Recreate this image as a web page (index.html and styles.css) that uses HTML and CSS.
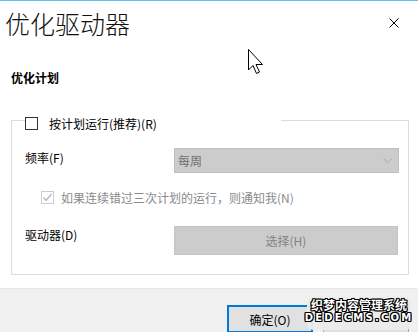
FILE: index.html
```html
<!DOCTYPE html>
<html lang="zh-CN">
<head>
<meta charset="utf-8">
<title>优化驱动器</title>
<link rel="stylesheet" href="styles.css">
</head>
<body>
<div class="dialog">
  <div class="header">
    <h1 class="title">优化驱动器</h1>
    <svg class="close" width="10" height="10" viewBox="0 0 10 10"><path d="M0.5 0.5L9.5 9.5M9.5 0.5L0.5 9.5" stroke="#000" stroke-width="1" fill="none"/></svg>
  </div>
  <div class="section-title">优化计划</div>
  <fieldset class="group">
    <legend class="legend">
      <span class="check"></span>
      <span class="legend-text">按计划运行(推荐)(R)</span>
    </legend>
    <div class="row row-freq">
      <span class="label">频率(F)</span>
      <div class="combo"><span class="combo-text">每周</span>
        <svg class="chev" width="9" height="5" viewBox="0 0 9 5"><path d="M0.5 0.5L4.5 4.5L8.5 0.5" stroke="#a8a8a8" fill="none"/></svg>
      </div>
    </div>
    <div class="row row-notify">
      <span class="check check-disabled">
        <svg width="11" height="11" viewBox="0 0 11 11"><path d="M1.5 5.5L4 8.5L9.5 2" stroke="#b3b3b3" stroke-width="1.2" fill="none"/></svg>
      </span>
      <span class="notify-text">如果连续错过三次计划的运行，则通知我(N)</span>
    </div>
    <div class="row row-drive">
      <span class="label">驱动器(D)</span>
      <div class="btn-select">选择(H)</div>
    </div>
  </fieldset>
  <div class="footer">
    <div class="btn btn-ok">确定(O)</div>
    <div class="btn btn-cancel"></div>
  </div>
  <div class="watermark">
    <span class="wm-cn">织梦内容管理系统</span>
    <span class="wm-en">DEDECMS.COM</span>
  </div>
  <svg class="cursor" width="18" height="27" viewBox="0 0 18 27"><path d="M0.5 0.5L0.5 21L5 16.5L8.5 24.5L11.5 23L8 15.5L14.5 15.5Z" fill="#fff" stroke="#000" stroke-width="1" stroke-linejoin="miter"/></svg>
</div>
</body>
</html>
```

FILE: styles.css
```css
* { box-sizing: border-box; }
html, body { margin: 0; padding: 0; }
body {
  width: 418px;
  height: 332px;
  overflow: hidden;
  background: #fff;
  font-family: "Noto Sans CJK SC", "Noto Sans", sans-serif;
  font-size: 12px;
  color: #000;
}
.dialog {
  position: relative;
  height: 332px;
  border-top: 1px solid #62c0ec;
  display: flex;
  flex-direction: column;
}
.header {
  display: flex;
  justify-content: space-between;
  align-items: flex-start;
  margin-top: 7px;
  height: 30px;
}
.title {
  margin: 0 0 0 5px;
  font-size: 25px;
  line-height: 30px;
  font-weight: 300;
  color: #111;
}
.close {
  margin: 10px 19px 0 0;
  display: block;
}
.section-title {
  margin: 32px 0 0 11px;
  font-weight: 700;
  line-height: 16px;
  font-size: 12px;
}
.group {
  margin: 31px 9px 0 11px;
  padding: 24px 0 19px 13px;
  border: 1px solid #dcdcdc;
  min-width: 0;
}
.legend {
  margin-left: 0;
  padding: 0;
  width: 256px;
  height: 7px;
  display: flex;
  align-items: flex-start;
  overflow: visible;
}
.check {
  flex: none;
  width: 13px;
  height: 13px;
  border: 1px solid #333;
  background: #fff;
  display: flex;
  align-items: center;
  justify-content: center;
}
.check-disabled {
  border-color: #cccccc;
}
.legend-text {
  margin-left: 11px;
  line-height: 13px;
  white-space: nowrap;
}
.row {
  display: flex;
  align-items: flex-start;
}
.label {
  width: 149px;
  flex: none;
  line-height: 16px;
  margin-top: 2px;
}
.row-drive .label { margin-top: 1px; }
.combo {
  width: 225px;
  height: 25px;
  background: #cccccc;
  border: 1px solid #bfbfbf;
  display: flex;
  align-items: center;
  justify-content: space-between;
  padding: 0 6px 0 3px;
}
.combo-text {
  color: #6f6f6f;
  line-height: 16px;
}
.chev { display: block; }
.row-notify {
  margin-top: 18px;
  padding-left: 16px;
  align-items: center;
}
.notify-text {
  margin-left: 7px;
  color: #8a8a8a;
  line-height: 13px;
  white-space: nowrap;
}
.row-drive {
  margin-top: 22px;
}
.btn-select {
  width: 224px;
  height: 29px;
  background: #cccccc;
  border: 1px solid #c4c4c4;
  display: flex;
  align-items: center;
  justify-content: center;
  color: #838383;
}
.footer {
  margin-top: 13px;
  flex: 1;
  background: #f0f0f0;
  border-top: 1px solid #e6e6e6;
  display: flex;
  justify-content: flex-end;
  align-items: flex-start;
  gap: 10px;
  padding: 16px 9px 0 0;
}
.btn {
  width: 86px;
  height: 28px;
  background: #e1e1e1;
  border: 1px solid #adadad;
  display: flex;
  align-items: center;
  justify-content: center;
}
.btn-ok {
  border: 2px solid #0078d7;
}
.watermark {
  position: absolute;
  left: 307px;
  top: 296px;
  width: 104px;
  display: flex;
  flex-direction: column;
  align-items: center;
  background: rgba(235,235,235,0.95);
  border-radius: 6px;
  padding: 1px 0 6px;
  color: #fff;
  font-weight: 700;
}
.wm-cn {
  font-size: 12px;
  line-height: 14px;
  text-shadow: -1px 0 #000, 1px 0 #000, 0 -1px #000, 0 1px #000, 1px 1px #000, -1px -1px #000, 1px -1px #000, -1px 1px #000;
}
.wm-en {
  font-family: "DejaVu Sans", sans-serif;
  font-size: 10px;
  line-height: 12px;
  letter-spacing: 2.2px;
  text-shadow: -1px 0 #000, 1px 0 #000, 0 -1px #000, 0 1px #000, 1px 1px #000, -1px -1px #000, 1px -1px #000, -1px 1px #000;
}
.cursor {
  position: absolute;
  left: 248px;
  top: 48px;
}
```
